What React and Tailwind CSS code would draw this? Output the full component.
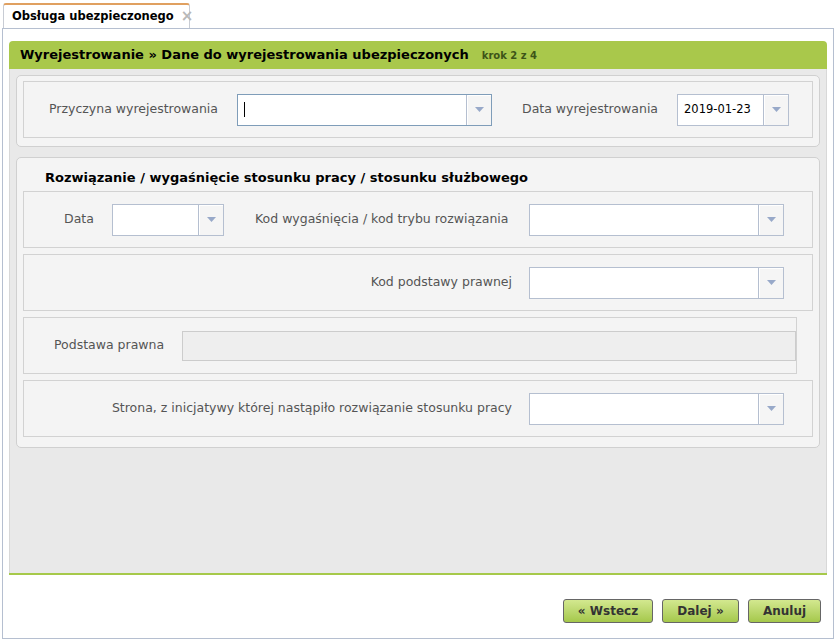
import React from 'react';

const font = { fontFamily: '"DejaVu Sans", Tahoma, sans-serif' };

function Trigger() {
  return (
    <div className="w-[25px] h-full border-l border-[#b5bfd0] bg-[#f5f5f5] flex items-center justify-center shadow-[inset_1px_1px_0_#fff]">
      <svg width="9" height="5" viewBox="0 0 9 5">
        <path d="M0 0 L9 0 L4.5 5 Z" fill="#98a9c9" />
      </svg>
    </div>
  );
}

function Combo({ width, value, focused }) {
  return (
    <div
      className={`h-[32px] flex bg-white border ${focused ? 'border-[#7f9db9]' : 'border-[#b5bfd0]'}`}
      style={{ width }}
    >
      <div className="flex-1 flex items-center px-[6px] text-[11.5px] text-black">
        {focused ? <span className="w-px h-[15px] bg-black" /> : value}
      </div>
      <Trigger />
    </div>
  );
}

function Row({ children, className = '' }) {
  return (
    <div className={`h-[57px] border border-[#d2d2d2] flex items-center ${className}`}>
      {children}
    </div>
  );
}

function Label({ children, className = '' }) {
  return <span className={`text-[12.5px] text-[#555] whitespace-nowrap ${className}`}>{children}</span>;
}

function Btn({ children, className = '' }) {
  return (
    <button className={`h-[24px] rounded-[3px] border border-[#666] bg-gradient-to-b from-[#d3e88f] to-[#a5c84a] text-[12px] font-bold text-[#333] ${className}`}>
      {children}
    </button>
  );
}

export default function App() {
  return (
    <div className="w-[836px] h-[642px] bg-white relative" style={font}>
      {/* zakładka */}
      <div className="pt-[3px] pl-[3px] flex">
        <div className="w-[187px] h-[25px] border border-[#c8ccd4] border-b-0 border-t-[2px] border-t-[#e0a060] rounded-t-[3px] bg-white flex items-center pl-[8px] gap-[7px] whitespace-nowrap">
          <span className="text-[11.5px] font-bold text-black">Obsługa ubezpieczonego</span>
          <span className="text-[15px] leading-none font-bold text-[#b8b8b8]">×</span>
        </div>
      </div>

      <div className="mx-[2px] h-[611px] border border-[#b5bfd0] pt-[12px] px-[6px]">
        <div className="h-[534px] flex flex-col border-b-[2px] border-[#a6c94a]">
          <div className="h-[28px] bg-[#a9c84b] rounded-t-[4px] flex items-center pl-[11px] gap-[13px]">
            <span className="text-[13px] font-bold text-black">Wyrejestrowanie » Dane do wyrejestrowania ubezpieczonych</span>
            <span className="text-[10px] font-bold text-[#3d5418]">krok 2 z 4</span>
          </div>

          <div className="flex-1 bg-[#e9e9e9] border-l border-r border-[#d8d8d8] px-[6px] pt-[6px]">
            {/* sekcja 1 */}
            <div className="h-[72px] rounded-[5px] border border-[#d0d0d0] bg-[#f4f4f4] px-[6px] pt-[5px]">
              <Row>
                <Label className="ml-[25px] w-[188px]">Przyczyna wyrejestrowania</Label>
                <Combo width={255} focused />
                <Label className="ml-[30px] w-[155px]">Data wyrejestrowania</Label>
                <Combo width={112} value="2019-01-23" />
              </Row>
            </div>

            {/* sekcja 2 */}
            <div className="mt-[10px] h-[291px] rounded-[5px] border border-[#d0d0d0] bg-[#f4f4f4] px-[6px]">
              <div className="h-[33px] flex items-center pl-[22px] pt-[6px]">
                <span className="text-[13px] font-bold text-black">Rozwiązanie / wygaśnięcie stosunku pracy / stosunku służbowego</span>
              </div>
              <div className="flex flex-col gap-[6px]">
                <Row>
                  <Label className="ml-[40px] w-[48px]">Data</Label>
                  <Combo width={112} />
                  <Label className="ml-[31px] w-[274px]">Kod wygaśnięcia / kod trybu rozwiązania</Label>
                  <Combo width={255} />
                </Row>
                <Row>
                  <Label className="w-[505px] pr-[17px] text-right">Kod podstawy prawnej</Label>
                  <Combo width={255} />
                </Row>
                <Row className="mr-[16px]">
                  <Label className="ml-[30px] w-[128px]">Podstawa prawna</Label>
                  <div className="flex-1 h-[30px] bg-[#eeeeee] border border-[#cccccc]" />
                </Row>
                <Row>
                  <Label className="w-[505px] pr-[17px] text-right">Strona, z inicjatywy której nastąpiło rozwiązanie stosunku pracy</Label>
                  <Combo width={255} />
                </Row>
              </div>
            </div>
          </div>
        </div>

        <div className="flex justify-end gap-[9px] mt-[24px] pr-[6px]">
          <Btn className="w-[90px]">« Wstecz</Btn>
          <Btn className="w-[77px]">Dalej »</Btn>
          <Btn className="w-[73px]">Anuluj</Btn>
        </div>
      </div>
    </div>
  );
}
